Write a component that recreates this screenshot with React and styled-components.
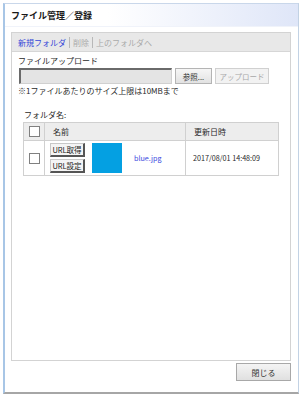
import React from "react";
import styled, { createGlobalStyle } from "styled-components";

const Global = createGlobalStyle`
  html, body { margin: 0; padding: 0; background: #ffffff; }
  body { font-family: "Noto Sans CJK JP", "Noto Sans", sans-serif; color: #222; white-space: nowrap; }
`;

const Window = styled.div`
  margin: 3px 0 0 3px;
  width: 293px;
  height: 388px;
  background: #fff;
  border-left: 2px solid #a8c6e6;
  border-top: 1px solid #c9d7ea;
  border-right: 1px solid #c2d2e4;
  border-bottom: 2px solid #a6a6a6;
  display: flex;
  flex-direction: column;
`;

const TitleBar = styled.div`
  height: 22px;
  display: flex;
  align-items: center;
  padding-left: 6px;
  font-size: 9px;
  font-weight: bold;
  color: #1a1a1a;
  background: linear-gradient(to right, #ffffff 35%, #dfe6f8 100%);
  border-bottom: 1px solid #f0f3fa;
`;

const Body = styled.div`
  flex: 1;
  display: flex;
  flex-direction: column;
  padding: 5px 7px 0 6px;
`;

const Panel = styled.div`
  height: 327px;
  border: 1px solid #d3d3d3;
  display: flex;
  flex-direction: column;
`;

const TabBar = styled.div`
  height: 18px;
  background: #e8e8e8;
  border-bottom: 1px solid #d6d6d6;
  display: flex;
  align-items: center;
  padding-left: 6px;
  font-size: 8px;
`;

const Tab = styled.span`
  color: ${(p) => (p.$active ? "#3446d8" : "#aaaaaa")};
  border-left: ${(p) => (p.$first ? "none" : "1px solid #b8b8b8")};
  line-height: 11px;
  padding: 0 3px 0 ${(p) => (p.$first ? 0 : 3)}px;
`;

const Content = styled.div`
  padding: 4px 6px 0 6px;
  display: flex;
  flex-direction: column;
`;

const Label = styled.div`
  font-size: 8px;
  color: #2a2a2a;
  line-height: 10px;
  margin-left: ${(p) => p.$indent || 0}px;
  margin-top: ${(p) => p.$top || 0}px;
`;

const UploadRow = styled.div`
  display: flex;
  align-items: center;
  gap: 3px;
  margin-top: 2px;
  margin-left: 1px;
`;

const FileInput = styled.div`
  width: 150px;
  height: 13px;
  background: #e4e4e4;
  border-top: 2px solid #6a6a6a;
  border-left: 2px solid #6a6a6a;
  border-right: 1px solid #d0d0d0;
  border-bottom: 1px solid #d0d0d0;
`;

const Button = styled.div`
  height: 16px;
  width: ${(p) => p.$w}px;
  box-sizing: border-box;
  display: flex;
  align-items: center;
  justify-content: center;
  font-size: 7.5px;
  color: ${(p) => (p.$disabled ? "#a8a8a8" : "#333")};
  background: ${(p) => (p.$disabled ? "#f2f2f2" : "linear-gradient(#f6f6f6, #e2e2e2)")};
  border: 1px solid ${(p) => (p.$disabled ? "#d0d0d0" : "#b4b4b4")};
`;

const Table = styled.div`
  margin: 2px 5px 0 5px;
  border: 1px solid #d0d0d0;
  display: grid;
  grid-template-columns: 20px 141px 1fr;
`;

const HeadCell = styled.div`
  height: 17px;
  background: #ededed;
  border-bottom: 1px solid #d0d0d0;
  border-left: ${(p) => (p.$first ? "none" : "1px solid #d0d0d0")};
  display: flex;
  align-items: center;
  justify-content: ${(p) => (p.$center ? "center" : "flex-start")};
  padding-left: ${(p) => (p.$center ? 0 : 8)}px;
  font-size: 8px;
  color: #2a2a2a;
`;

const Cell = styled.div`
  height: 34px;
  border-left: ${(p) => (p.$first ? "none" : "1px solid #d0d0d0")};
  display: flex;
  align-items: center;
  justify-content: ${(p) => (p.$center ? "center" : "flex-start")};
  padding-left: ${(p) => p.$pl || 0}px;
  font-size: 7.2px;
  color: #2a2a2a;
`;

const Check = styled.div`
  width: 9px;
  height: 9px;
  border: 1px solid #808080;
  background: #fff;
`;

const UrlButtons = styled.div`
  display: flex;
  flex-direction: column;
  gap: 2px;
`;

const UrlButton = styled.div`
  width: 32px;
  height: 11px;
  font-size: 7.5px;
  line-height: 11px;
  text-align: center;
  color: #222;
  background: #f4f4f4;
  border: 1px solid #c8c8c8;
  border-right: 2px solid #555;
  border-bottom: 2px solid #555;
`;

const Thumb = styled.div`
  width: 30px;
  height: 30px;
  background: #04a0e2;
  margin-left: 7px;
`;

const FileLink = styled.span`
  color: #3a48e0;
  font-size: 7.2px;
  margin-left: 12px;
`;

const Footer = styled.div`
  display: flex;
  justify-content: flex-end;
  padding-top: 2px;
`;

const CloseButton = styled.div`
  width: 55px;
  height: 18px;
  box-sizing: border-box;
  display: flex;
  align-items: center;
  justify-content: center;
  font-size: 8px;
  color: #333;
  background: linear-gradient(#f4f4f4, #e0e0e0);
  border: 1px solid #a8a8a8;
`;

export default function App() {
  return (
    <>
      <Global />
      <Window>
        <TitleBar>ファイル管理／登録</TitleBar>
        <Body>
          <Panel>
            <TabBar>
              <Tab $active $first>新規フォルダ</Tab>
              <Tab>削除</Tab>
              <Tab>上のフォルダへ</Tab>
            </TabBar>
            <Content>
              <Label>ファイルアップロード</Label>
              <UploadRow>
                <FileInput />
                <Button $w={37}>参照...</Button>
                <Button $w={54} $disabled>アップロード</Button>
              </UploadRow>
              <Label $top={2}>※1ファイルあたりのサイズ上限は10MBまで</Label>
              <Label $top={14} $indent={6}>フォルダ名:</Label>
              <Table>
                <HeadCell $first $center><Check /></HeadCell>
                <HeadCell>名前</HeadCell>
                <HeadCell>更新日時</HeadCell>
                <Cell $first $center><Check /></Cell>
                <Cell $pl={5}>
                  <UrlButtons>
                    <UrlButton>URL取得</UrlButton>
                    <UrlButton>URL設定</UrlButton>
                  </UrlButtons>
                  <Thumb />
                  <FileLink>blue.jpg</FileLink>
                </Cell>
                <Cell $pl={7}>2017/08/01 14:48:09</Cell>
              </Table>
            </Content>
          </Panel>
          <Footer>
            <CloseButton>閉じる</CloseButton>
          </Footer>
        </Body>
      </Window>
    </>
  );
}
